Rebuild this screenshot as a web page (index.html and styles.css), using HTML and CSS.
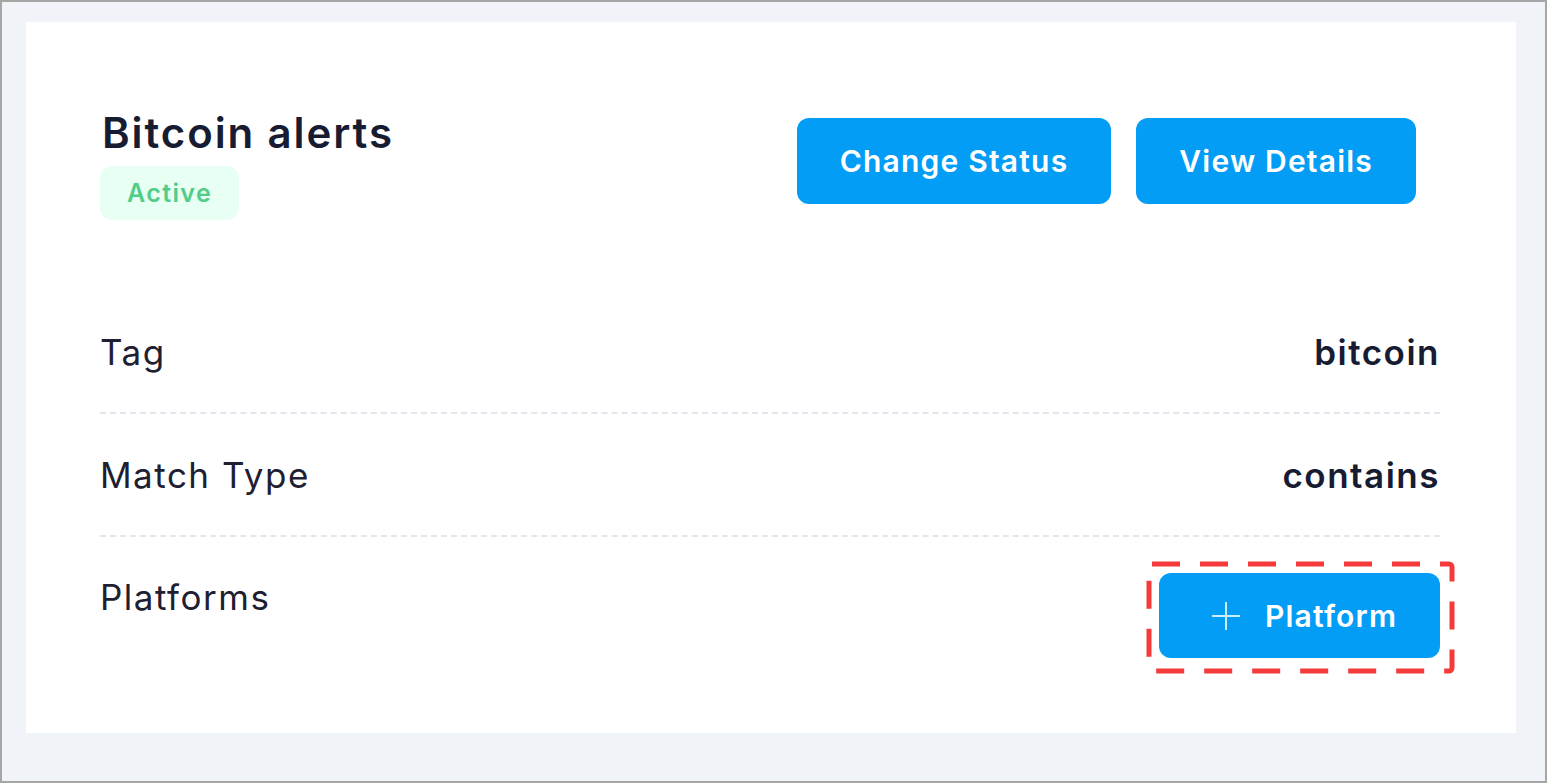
FILE: index.html
```html
<!DOCTYPE html>
<html lang="en">
<head>
    <meta charset="UTF-8">
    <title>Bitcoin alerts</title>
    <link rel="stylesheet" href="styles.css">
</head>
<body>
    <div class="frame">
        <div class="card">
            <div class="card-header">
                <div class="title-block">
                    <h1>Bitcoin alerts</h1>
                    <span class="badge-active">Active</span>
                </div>
                <div class="actions">
                    <button class="btn-primary">Change Status</button>
                    <button class="btn-primary">View Details</button>
                </div>
            </div>

            <div class="info-row">
                <span class="info-label">Tag</span>
                <span class="info-value">bitcoin</span>
            </div>
            <div class="info-row">
                <span class="info-label">Match Type</span>
                <span class="info-value">contains</span>
            </div>
            <div class="info-row last">
                <span class="info-label">Platforms</span>
                <div class="highlight">
                    <button class="btn-primary btn-platform">
                        <svg class="plus-icon" width="30" height="30" viewBox="0 0 30 30">
                            <path d="M15 1v28M1 15h28" stroke="currentColor" stroke-width="2" fill="none"/>
                        </svg>
                        Platform
                    </button>
                    <svg class="highlight-box" width="309" height="113" viewBox="0 0 309 113">
                        <rect x="3" y="3" width="303" height="107" rx="3" fill="none" stroke="#f43a3a" stroke-width="5" stroke-dasharray="28 20"/>
                    </svg>
                </div>
            </div>
        </div>
    </div>
</body>
</html>
```

FILE: styles.css
```css
* {
    margin: 0;
    padding: 0;
    box-sizing: border-box;
}

body {
    font-family: Inter, "Noto Sans", sans-serif;
    color: #181c32;
    background: #ffffff;
}

.frame {
    width: 1547px;
    height: 783px;
    border: 2px solid #a6a6a6;
    background: #f0f4f8;
    padding: 20px 29px 0 24px;
}

.card {
    background: #ffffff;
    height: 711px;
    padding: 86px 76px 0 74px;
}

.card-header {
    display: flex;
    justify-content: space-between;
    align-items: flex-start;
    margin-bottom: 71px;
}

.title-block h1 {
    font-size: 42px;
    font-weight: 600;
    letter-spacing: 1.9px;
    line-height: 50px;
    color: #181c32;
    margin-left: 2px;
}

.badge-active {
    display: inline-block;
    margin-top: 8px;
    background: #e8fff3;
    color: #50cd89;
    font-size: 25px;
    font-weight: 600;
    letter-spacing: 1.4px;
    padding: 0 27px;
    line-height: 54px;
    border-radius: 12px;
}

.actions {
    display: flex;
    gap: 25px;
    margin-top: 10px;
    margin-right: 24px;
}

.btn-primary {
    font-family: inherit;
    background: #039df6;
    color: #ffffff;
    border: none;
    border-radius: 12px;
    height: 86px;
    padding: 0 43px;
    font-size: 30px;
    font-weight: 600;
    letter-spacing: 1.2px;
    cursor: pointer;
}

.info-row {
    display: flex;
    justify-content: space-between;
    align-items: flex-start;
    padding: 36px 0 35px;
    border-bottom: 2px dashed #e4e6ef;
}

.info-row.last {
    border-bottom: none;
    padding-top: 35px;
}

.info-label {
    font-size: 35px;
    letter-spacing: 1.5px;
    line-height: 50px;
    color: #1e2032;
}

.info-value {
    font-size: 35px;
    letter-spacing: 1.5px;
    line-height: 50px;
    font-weight: 600;
    color: #181c32;
}

.highlight {
    position: relative;
    margin-top: 1px;
}

.btn-platform {
    display: flex;
    align-items: center;
    gap: 24px;
    width: 281px;
    height: 85px;
    padding: 0 40px 0 52px;
}

.plus-icon {
    color: rgba(255, 255, 255, 0.8);
}

.highlight-box {
    position: absolute;
    left: -13px;
    top: -12px;
}
```
